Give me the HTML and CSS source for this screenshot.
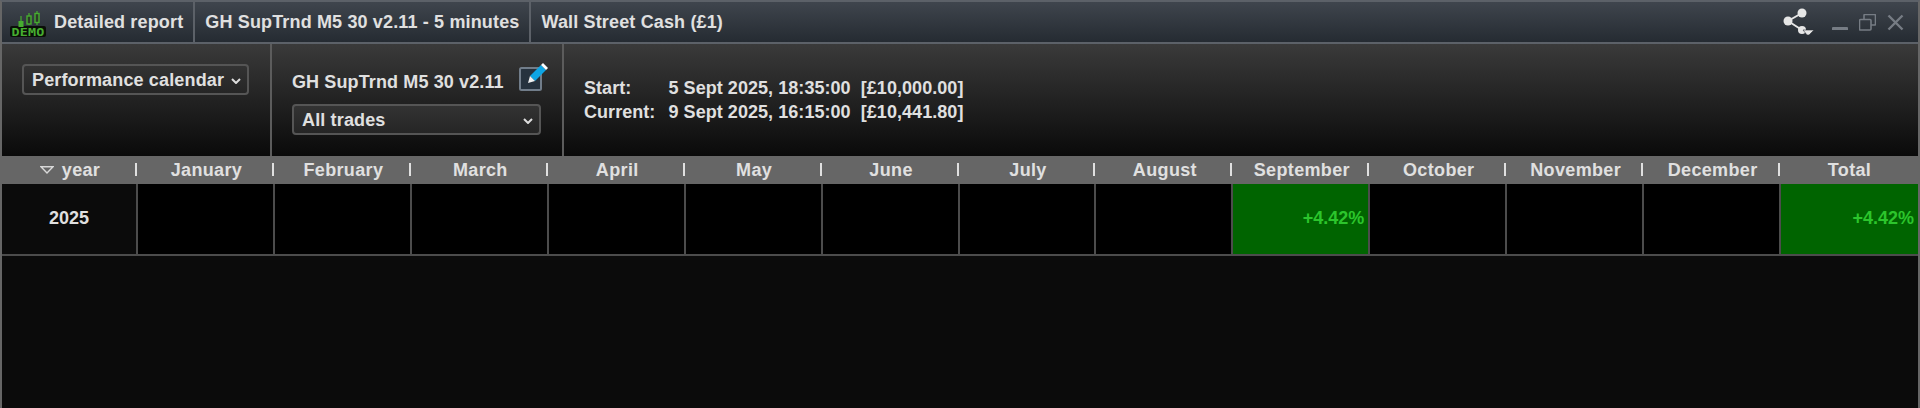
FILE: index.html
```html
<!DOCTYPE html>
<html lang="en">
<head>
<meta charset="utf-8">
<title>Detailed report</title>
<link rel="stylesheet" href="styles.css">
</head>
<body>
<div class="window">
  <header class="titlebar">
    <div class="tab tab-first">
      <svg class="logo" width="36" height="26" viewBox="0 0 36 26">
        <rect x="0" y="15" width="36" height="11" rx="2" fill="#0a0f08"/>
        <path d="M11 5v11M19 2v12M27 0v14" fill="none" stroke="#46ad30" stroke-width="1.200"/>
        <rect x="8.500" y="10" width="5" height="6" fill="#46ad30"/>
        <rect x="17" y="5" width="4" height="8" fill="#2c3a28" stroke="#46ad30" stroke-width="1.400"/>
        <rect x="25" y="2.500" width="4" height="9" fill="#2c3a28" stroke="#46ad30" stroke-width="1.400"/>
        <text x="1.500" y="24.500" textLength="33" lengthAdjust="spacingAndGlyphs" class="logo-text">DEMO</text>
      </svg>
      <span>Detailed report</span>
    </div>
    <div class="tab">GH SupTrnd M5 30 v2.11 - 5 minutes</div>
    <div class="tab tab-last">Wall Street Cash (£1)</div>
    <div class="controls">
      <svg class="share" width="32" height="28" viewBox="0 0 32 28">
        <path d="M5 13 19 5M5 13l14 9" stroke="#e6e6e6" stroke-width="2" fill="none"/>
        <circle cx="5" cy="13" r="4.500" fill="#e6e6e6"/>
        <circle cx="19" cy="5" r="4.500" fill="#e6e6e6"/>
        <circle cx="19" cy="22" r="4" fill="#e6e6e6"/>
        <path d="M20 22h11l-5 5h-2z" fill="#e6e6e6" stroke="#2b3138" stroke-width=".6"/>
      </svg>
      <svg class="winbtn" width="16" height="16" viewBox="0 0 16 16"><rect x="0" y="13" width="16" height="4" rx="1" fill="#767c84"/></svg>
      <svg class="winbtn" width="17" height="17" viewBox="0 0 17 17"><path d="M5 5V1.500a1 1 0 0 1 1-1h9.500a1 1 0 0 1 1 1V10a1 1 0 0 1-1 1H12M1.500 5.500h9.500a1 1 0 0 1 1 1V15a1 1 0 0 1-1 1H1.500a1 1 0 0 1-1-1V6.500a1 1 0 0 1 1-1z" fill="none" stroke="#767c84" stroke-width="1.600"/></svg>
      <svg class="winbtn" width="17" height="17" viewBox="0 0 17 17"><path d="M1.500 1.500l14 14M15.500 1.500l-14 14" fill="none" stroke="#767c84" stroke-width="2.400"/></svg>
    </div>
  </header>

  <section class="toolbar">
    <div class="panel panel-view">
      <button class="select select-view"><span>Performance calendar</span><svg class="chev" width="10" height="6" viewBox="0 0 10 6"><path d="M1 1l4 4 4-4" fill="none" stroke="#ddd" stroke-width="2"/></svg></button>
    </div>
    <div class="panel panel-strategy">
      <div class="strategy-row">
        <span class="strategy-name">GH SupTrnd M5 30 v2.11</span>
        <svg class="edit" width="30" height="30" viewBox="0 0 30 30">
          <rect x="2" y="5" width="21" height="22" rx="1.500" fill="#26323e" stroke="#717d8a" stroke-width="2"/>
          <path d="M12 13 23 2l5 5-11 11z" fill="#0ea5e4"/>
          <path d="M23 2l2-2 5 5-2 2z" fill="#fff"/>
          <path d="M10 20l2-7 5 5z" fill="#f1f1f1"/>
        </svg>
      </div>
      <button class="select select-trades"><span>All trades</span><svg class="chev" width="10" height="6" viewBox="0 0 10 6"><path d="M1 1l4 4 4-4" fill="none" stroke="#ddd" stroke-width="2"/></svg></button>
    </div>
    <div class="panel panel-info">
      <div class="info-label">Start:</div><div>5 Sept 2025, 18:35:00&nbsp;&nbsp;[£10,000.00]</div>
      <div class="info-label">Current:</div><div>9 Sept 2025, 16:15:00&nbsp;&nbsp;[£10,441.80]</div>
    </div>
  </section>

  <div class="calendar">
    <div class="head head-year"><svg class="sort" width="14" height="8" viewBox="0 0 14 8"><path d="M1 .8h12L7 7z" fill="none" stroke="#d8d8d8" stroke-width="1.400"/></svg>year</div>
    <div class="head">January</div>
    <div class="head">February</div>
    <div class="head">March</div>
    <div class="head">April</div>
    <div class="head">May</div>
    <div class="head">June</div>
    <div class="head">July</div>
    <div class="head">August</div>
    <div class="head">September</div>
    <div class="head">October</div>
    <div class="head">November</div>
    <div class="head">December</div>
    <div class="head head-last">Total</div>

    <div class="cell cell-year">2025</div>
    <div class="cell"></div>
    <div class="cell"></div>
    <div class="cell"></div>
    <div class="cell"></div>
    <div class="cell"></div>
    <div class="cell"></div>
    <div class="cell"></div>
    <div class="cell"></div>
    <div class="cell cell-pos">+4.42%</div>
    <div class="cell"></div>
    <div class="cell"></div>
    <div class="cell"></div>
    <div class="cell cell-pos cell-last">+4.42%</div>
  </div>
</div>
</body>
</html>
```

FILE: styles.css
```css
* { box-sizing: border-box; }
html, body { margin: 0; height: 100%; background: #0b0b0b; }
body { overflow: hidden; font: bold 18px "Liberation Sans", Arial, sans-serif; color: #e0e0e0; }

.window {
  height: 408px;
  display: flex;
  flex-direction: column;
  border: solid #666;
  border-width: 2px 2px 0;
  border-top-color: #5c6168;
  background: #0b0b0b;
}

.titlebar {
  height: 42px;
  flex: none;
  display: flex;
  align-items: stretch;
  background: linear-gradient(#3f454d, #252b32);
  border-bottom: 2px solid #5c6168;
  letter-spacing: .15px;
}
.tab {
  display: flex;
  align-items: center;
  padding: 0 10px;
  border-right: 2px solid #5c6168;
  white-space: nowrap;
}
.tab-first { padding-left: 8px; gap: 8px; }
.tab-last { border-right: 0; }
.logo { display: block; margin-top: 3px; }
.logo-text { font: bold 10.500px "DejaVu Sans Mono", monospace; fill: #46ad30; }

.controls { margin-left: auto; display: flex; align-items: center; gap: 11px; padding-right: 14px; }
.share { margin-right: 6px; }

.toolbar {
  height: 112px;
  flex: none;
  display: flex;
  background: linear-gradient(#3a3a3a, #0a0a0a);
}
.panel { border-right: 2px solid #5c5c5c; }
.panel-view { width: 270px; padding: 20px 0 0 20px; }
.panel-strategy { width: 292px; padding: 16px 0 0 20px; }
.panel-info {
  border-right: 0;
  display: grid;
  grid-template-columns: 84.500px auto;
  align-content: start;
  line-height: 24px;
  padding: 32px 0 0 20px;
  letter-spacing: .05px;
}

.select {
  display: flex;
  align-items: center;
  justify-content: space-between;
  height: 31px;
  padding: 2px 6px 0 8px;
  font: inherit;
  letter-spacing: .15px;
  white-space: nowrap;
  color: inherit;
  background: linear-gradient(#333, #252525);
  border: 2px solid #555;
  border-radius: 4px;
}
.select-view { width: 227px; }
.select-trades { width: 249px; }

.strategy-row { display: flex; align-items: center; height: 44px; letter-spacing: .12px; }
.strategy-name { width: 226px; }
.edit { display: block; margin-top: -8px; }

.calendar {
  height: 100px;
  flex: none;
  display: grid;
  grid-template-columns: 136px repeat(13, 1fr);
  grid-template-rows: 28px 72px;
  background: #666;
}
.head {
  position: relative;
  background: #666;
  display: flex;
  align-items: center;
  justify-content: center;
  gap: 8px;
  letter-spacing: .35px;
}
.head::after {
  content: "";
  position: absolute;
  right: 1px;
  top: 7px;
  height: 13px;
  width: 2px;
  background: #e0e0e0;
}
.head-last::after { display: none; }
.cell {
  background: #000;
  border-right: 2px solid #4c4c4c;
  border-bottom: 2px solid #4c4c4c;
  display: flex;
  align-items: center;
  justify-content: flex-end;
  padding: 0 4px 2px 0;
}
.cell-year { background: #0b0b0b; justify-content: center; padding: 0 0 2px; }
.cell-pos { background: #006400; color: #2cc52c; }
.cell-last { border-right: 0; }
```
